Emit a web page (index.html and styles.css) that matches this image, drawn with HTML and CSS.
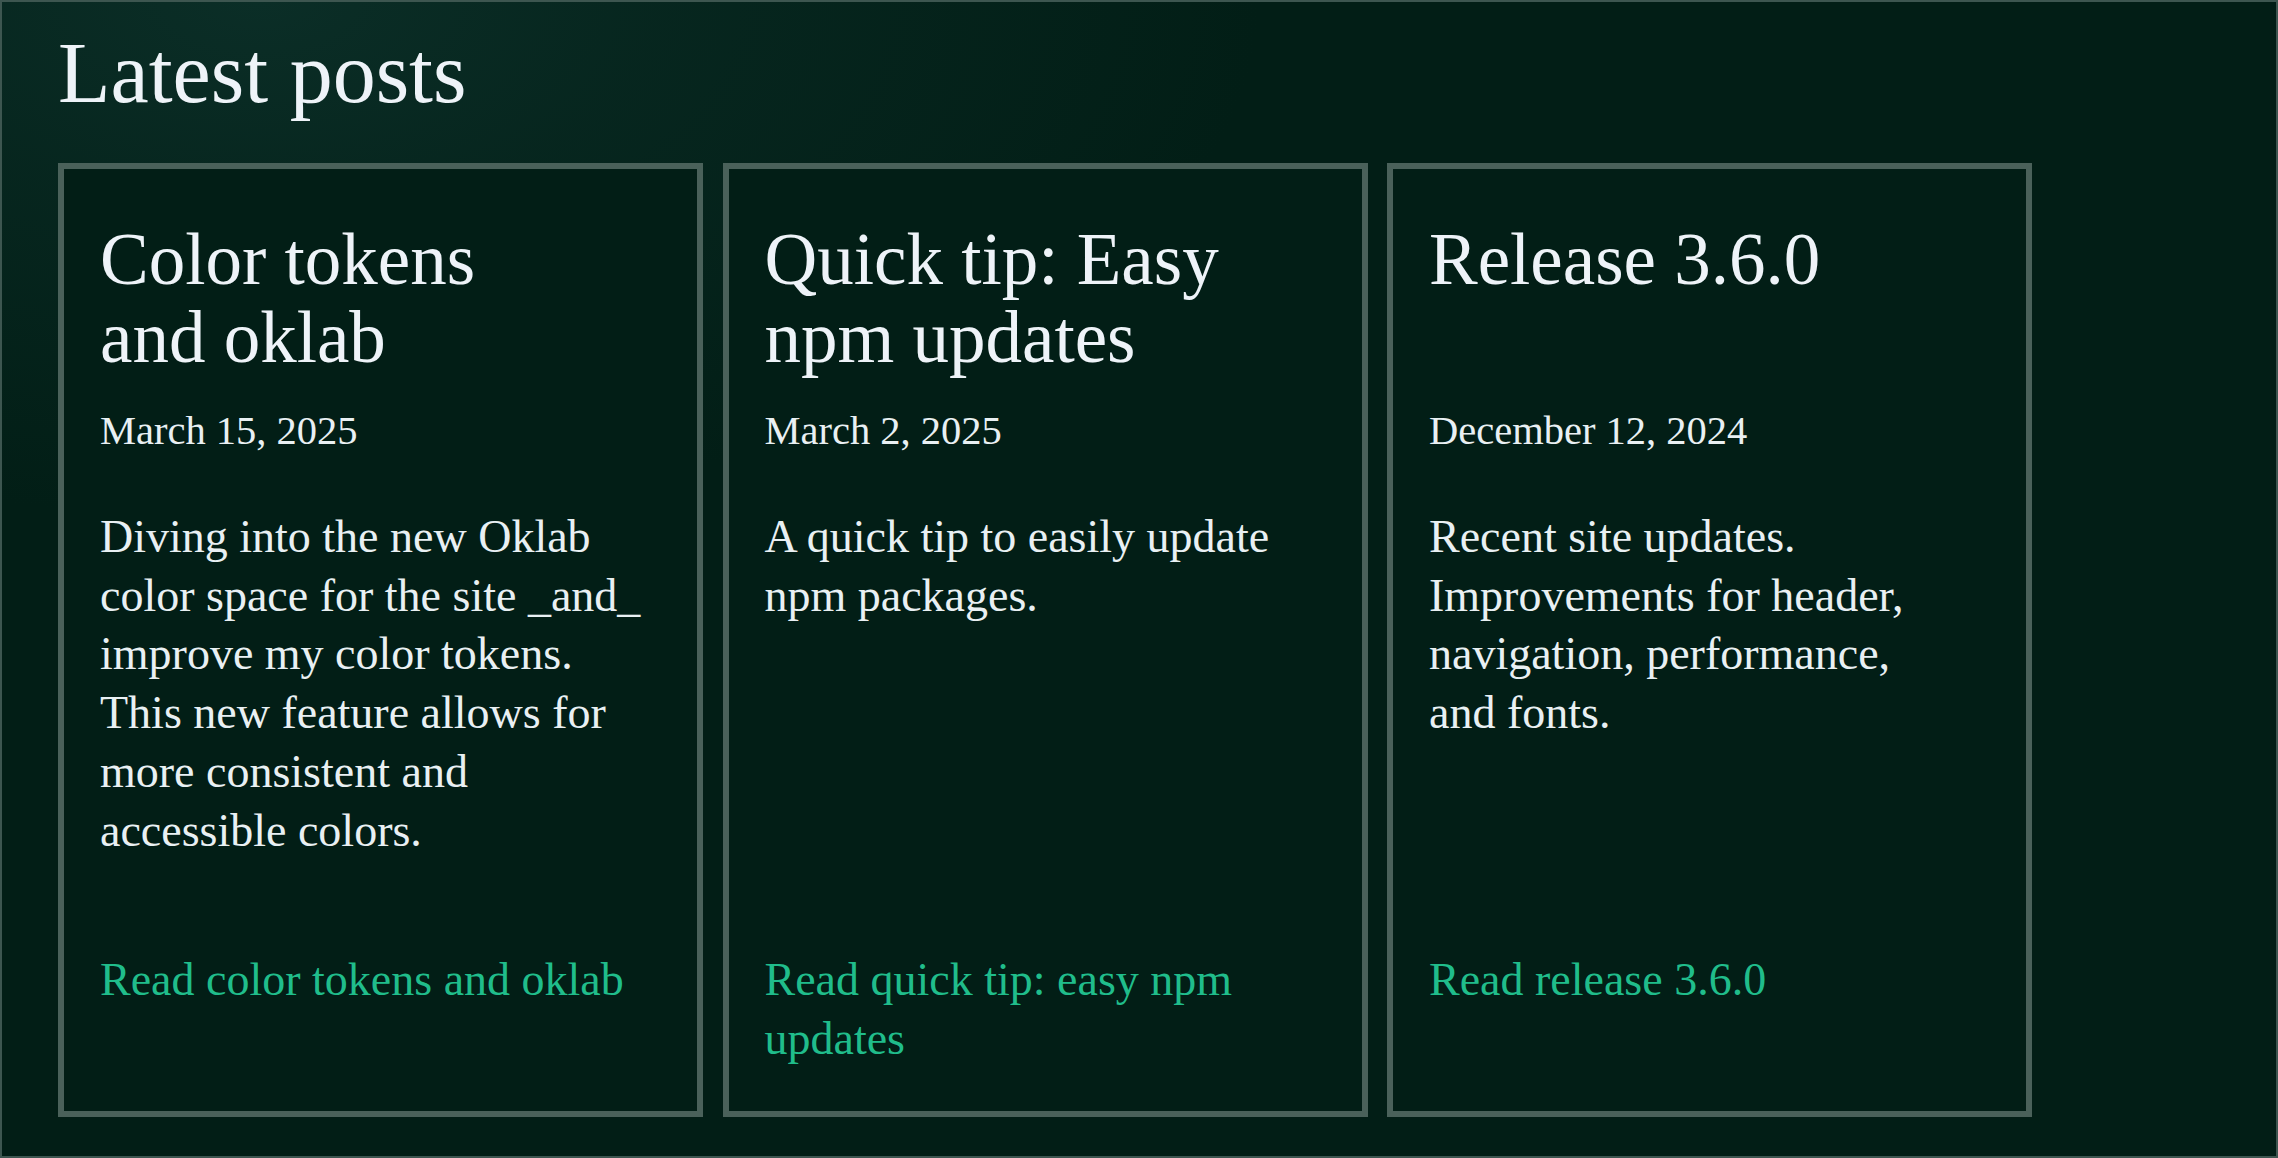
FILE: index.html
```html
<!DOCTYPE html>
<html lang="en">
<head>
<meta charset="utf-8">
<title>Latest posts</title>
<link rel="stylesheet" href="styles.css">
</head>
<body>
<main class="page">
  <h1 class="page-title">Latest posts</h1>
  <ul class="post-grid">
    <li class="post-card">
      <h2 class="post-title">Color tokens and oklab</h2>
      <time class="post-date" datetime="2025-03-15">March 15, 2025</time>
      <p class="post-excerpt">Diving into the new Oklab color space for the site _and_ improve my color tokens. This new feature allows for more consistent and accessible colors.</p>
      <a class="post-link" href="#">Read color tokens and oklab</a>
    </li>
    <li class="post-card">
      <h2 class="post-title">Quick tip: Easy npm updates</h2>
      <time class="post-date" datetime="2025-03-02">March 2, 2025</time>
      <p class="post-excerpt">A quick tip to easily update npm packages.</p>
      <a class="post-link" href="#">Read quick tip: easy npm updates</a>
    </li>
    <li class="post-card">
      <h2 class="post-title">Release 3.6.0</h2>
      <time class="post-date" datetime="2024-12-12">December 12, 2024</time>
      <p class="post-excerpt">Recent site updates. Improvements for header, navigation, performance, and fonts.</p>
      <a class="post-link" href="#">Read release 3.6.0</a>
    </li>
  </ul>
</main>
</body>
</html>
```

FILE: styles.css
```css
html, body {
  margin: 0;
  height: 100%;
}

body {
  background-color: #021e16;
  background-image: radial-gradient(ellipse 1000px 520px at 260px 0px, #0b2e27 0%, rgba(11, 46, 39, 0.5) 40%, rgba(2, 30, 22, 0) 100%);
  background-repeat: no-repeat;
  color: #e9f0f3;
  font-family: "Liberation Serif", "Times New Roman", serif;
}

.page {
  box-sizing: border-box;
  min-height: 100vh;
  border: 2px solid #3d5650;
  padding: 0 56px;
}

.page-title {
  margin: 28px 0 47px;
  font-size: 86px;
  line-height: 1;
  font-weight: normal;
  color: #eef3f8;
}

.post-grid {
  list-style: none;
  margin: 0;
  padding: 0;
  display: grid;
  grid-template-columns: repeat(3, 645px);
  grid-template-rows: repeat(4, auto);
  column-gap: 19.5px;
  row-gap: 0;
}

.post-card {
  grid-row: span 4;
  display: grid;
  grid-template-rows: subgrid;
  row-gap: 0;
  align-content: start;
  background: #021e16;
  border: 6px solid #4a615a;
  padding: 52px 40px 42px 36px;
}

.post-title {
  margin: 0;
  font-size: 73px;
  line-height: 78px;
  font-weight: normal;
  color: #eef3f8;
  text-wrap: balance;
}

.post-date {
  display: block;
  margin-top: 28px;
  font-size: 40.5px;
  line-height: 51px;
}

.post-excerpt {
  margin: 52px 0 0;
  font-size: 46px;
  line-height: 58.7px;
  text-wrap: pretty;
}

.post-link {
  align-self: start;
  margin-top: 91px;
  font-size: 46px;
  line-height: 58.7px;
  color: #20bd8b;
  text-decoration: none;
}
```
